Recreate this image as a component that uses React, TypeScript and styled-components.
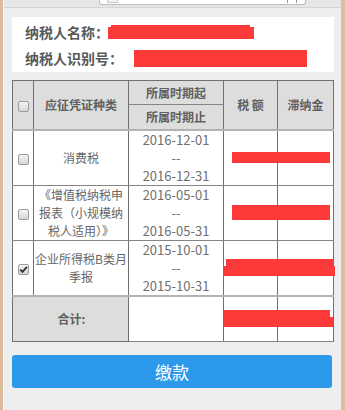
import React from "react";
import styled, { createGlobalStyle } from "styled-components";

const GlobalStyle = createGlobalStyle`
  html, body { margin: 0; padding: 0; background: #eeeeee; }
  body { font-family: "Noto Sans CJK SC", "Noto Sans", sans-serif; }
  * { box-sizing: border-box; }
`;

const Frame = styled.div`
  width: 345px;
  height: 410px;
  border-left: 3px solid #dfbc9e;
  border-right: 4px solid #dfbc9e;
  display: flex;
  overflow: hidden;
`;

const Inner = styled.div`
  flex: 1;
  display: flex;
  flex-direction: column;
  border-left: 1px solid #f6f6f6;
  border-right: 2px solid #dadada;
  background: #eeeeee;
`;

const TopStrip = styled.div`
  height: 8px;
  background: #e6e6e6;
  border-bottom: 1px solid #d4d4d4;
  display: flex;
  align-items: flex-start;
`;

const AddressBox = styled.div`
  margin-left: 95px;
  width: 207px;
  height: 5px;
  background: #ffffff;
  border: 1px solid #bdbdbd;
  border-top: none;
  border-radius: 0 0 3px 3px;
  display: flex;
  align-items: flex-start;
  padding: 0 8px 0 7px;
`;

const AddrIcon = styled.span`
  width: 11px;
  height: 3px;
  border: 1px solid #c8c8c8;
  border-top: none;
  background: #f2f2f2;
`;

const AddrMarks = styled.span`
  margin-left: auto;
  display: flex;
  gap: 8px;
  align-items: flex-start;
`;

const Tick = styled.span`
  width: 1px;
  height: 3px;
  background: #9a9a9a;
`;

const Content = styled.div`
  padding: 9px 7px 0 8px;
  display: flex;
  flex-direction: column;
`;

const Card = styled.div`
  background: #ffffff;
  padding: 2px 13px 1px;
  font-size: 14px;
  font-weight: bold;
  color: #585858;
`;

const InfoRow = styled.div`
  display: flex;
  align-items: center;
  height: 26px;
  white-space: nowrap;
`;

const Label = styled.span`
  line-height: 26px;
`;

const Redact = styled.span<{ $ml?: number }>`
  display: flex;
  flex-direction: column;
  margin-left: ${(p) => p.$ml ?? 0}px;
`;

const Seg = styled.span<{ $x: number; $w: number; $h: number }>`
  display: block;
  margin-left: ${(p) => p.$x}px;
  width: ${(p) => p.$w}px;
  height: ${(p) => p.$h}px;
  background: #fd3a3a;
`;

type SegT = [number, number, number];
const Bar = ({ segs, ml }: { segs: SegT[]; ml?: number }) => (
  <Redact $ml={ml}>
    {segs.map(([x, w, h], i) => (
      <Seg key={i} $x={x} $w={w} $h={h} />
    ))}
  </Redact>
);

const Table = styled.table`
  margin-top: 8px;
  width: 321px;
  border-collapse: collapse;
  table-layout: fixed;
  font-size: 12px;
  color: #666;
`;

const Th = styled.th<{ $last?: boolean }>`
  background: #dddddd;
  border: 1px solid #707070;
  border-bottom: ${(p) => (p.$last ? "2px solid #b3b3b3" : "1px solid #858585")};
  font-weight: bold;
  color: #606060;
  text-align: center;
  vertical-align: middle;
  padding: 0;
  white-space: nowrap;
`;

const HeadRow = styled.tr<{ $h: number }>`
  height: ${(p) => p.$h}px;
`;

const BodyRow = styled.tr<{ $h: number }>`
  height: ${(p) => p.$h}px;
`;

const Td = styled.td`
  border: 1px solid #707070;
  border-top-color: #858585;
  border-bottom-color: #858585;
  background: #ffffff;
  text-align: center;
  vertical-align: middle;
  padding: 0;
  line-height: 18px;
  white-space: nowrap;
  overflow: visible;
`;

const DateCell = styled(Td)`
  font-family: "Noto Sans CJK SC", sans-serif;
  font-size: 13px;
  color: #707070;
`;

const FootRow = styled.tr`
  height: 46px;
  td, th { border-top: 2px solid #b3b3b3; }
`;

const FootLabel = styled.th`
  background: #dddddd;
  border: 1px solid #707070;
  font-weight: bold;
  color: #606060;
  font-size: 12px;
  text-align: center;
  vertical-align: middle;
  padding: 0 0 0 2px;
`;

const Box = styled.span<{ $checked?: boolean }>`
  display: inline-flex;
  align-items: center;
  justify-content: center;
  width: 11px;
  height: 11px;
  border: 1px solid #9c9c9c;
  border-radius: 2px;
  background: linear-gradient(#f4f4f4, #d6d6d6);
  vertical-align: middle;
`;

const Check = ({ checked }: { checked?: boolean }) => (
  <Box $checked={checked}>
    {checked && (
      <svg width="9" height="9" viewBox="0 0 9 9">
        <path d="M1.2 4.6 L3.5 6.9 L7.9 1.8" fill="none" stroke="#333" strokeWidth="1.9" />
      </svg>
    )}
  </Box>
);

const Button = styled.button`
  margin-top: 13px;
  height: 33px;
  width: 320px;
  border: none;
  border-radius: 3px;
  background: #2c99ea;
  color: #ffffff;
  font-family: "Noto Sans CJK SC", sans-serif;
  font-size: 17px;
  padding: 0;
`;

const Dates = ({ a, b }: { a: string; b: string }) => (
  <>
    {a}
    <br />
    --
    <br />
    {b}
  </>
);

export default function App() {
  return (
    <>
      <GlobalStyle />
      <Frame>
        <Inner>
          <TopStrip>
            <AddressBox>
              <AddrIcon />
              <AddrMarks>
                <Tick />
                <Tick />
              </AddrMarks>
            </AddressBox>
          </TopStrip>
          <Content>
            <Card>
              <InfoRow>
                <Label>纳税人名称：</Label>
                <Bar segs={[[3, 139, 2], [0, 146, 12]]} ml={-1} />
              </InfoRow>
              <InfoRow>
                <Label>纳税人识别号：</Label>
                <Bar segs={[[0, 173, 17]]} ml={11} />
              </InfoRow>
            </Card>
            <Table>
              <colgroup>
                <col style={{ width: 21 }} />
                <col style={{ width: 95 }} />
                <col style={{ width: 95 }} />
                <col style={{ width: 54 }} />
                <col style={{ width: 56 }} />
              </colgroup>
              <thead>
                <HeadRow $h={24}>
                  <Th rowSpan={2} $last>
                    <Check />
                  </Th>
                  <Th rowSpan={2} $last>应征凭证种类</Th>
                  <Th>所属时期起</Th>
                  <Th rowSpan={2} $last>税 额</Th>
                  <Th rowSpan={2} $last>滞纳金</Th>
                </HeadRow>
                <HeadRow $h={25}>
                  <Th $last>所属时期止</Th>
                </HeadRow>
              </thead>
              <tbody>
                <BodyRow $h={52}>
                  <Td><Check /></Td>
                  <Td>消费税</Td>
                  <DateCell><Dates a="2016-12-01" b="2016-12-31" /></DateCell>
                  <Td><Bar segs={[[8, 98, 11]]} /></Td>
                  <Td />
                </BodyRow>
                <BodyRow $h={53}>
                  <Td><Check /></Td>
                  <Td>
                    《增值税纳税申
                    <br />
                    报表（小规模纳
                    <br />
                    税人适用）》
                  </Td>
                  <DateCell><Dates a="2016-05-01" b="2016-05-31" /></DateCell>
                  <Td><Bar segs={[[8, 98, 15]]} /></Td>
                  <Td />
                </BodyRow>
                <BodyRow $h={52}>
                  <Td><Check checked /></Td>
                  <Td>
                    企业所得税B类月
                    <br />
                    季报
                  </Td>
                  <DateCell><Dates a="2015-10-01" b="2015-10-31" /></DateCell>
                  <Td><Bar segs={[[2, 108, 7], [-1, 112, 10]]} /></Td>
                  <Td />
                </BodyRow>
              </tbody>
              <tfoot>
                <FootRow>
                  <FootLabel colSpan={2}>合计:</FootLabel>
                  <Td />
                  <Td><Bar segs={[[0, 106, 7], [0, 109, 10]]} /></Td>
                  <Td />
                </FootRow>
              </tfoot>
            </Table>
            <Button>缴款</Button>
          </Content>
        </Inner>
      </Frame>
    </>
  );
}
